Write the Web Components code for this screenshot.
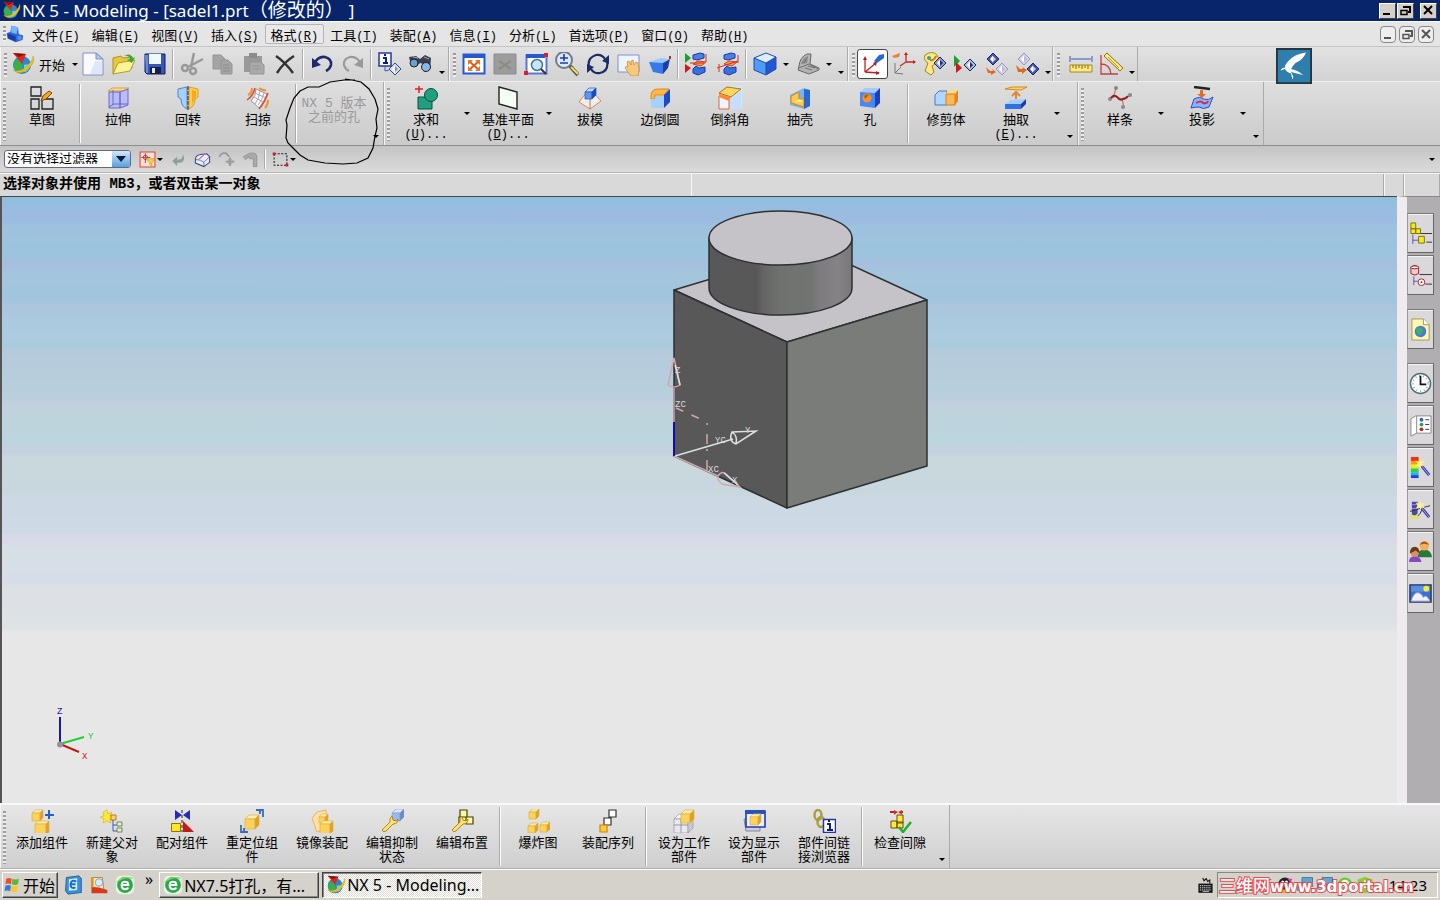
<!DOCTYPE html>
<html lang="zh-CN">
<head>
<meta charset="utf-8">
<title>NX 5 - Modeling</title>
<style>
html,body{margin:0;height:100%}
body{font-family:"Noto Sans CJK SC","Liberation Sans",sans-serif;font-size:13px;color:#000;background:#d4d0c8}
</style>
</head>
<body>
<nx-app></nx-app>
<script>
/* ---------- icon drawings, all on a 24 x 24 grid ---------- */
const cube=(x,y,w,d,t,f,s,k='none')=>`<g stroke="${k}" stroke-width=".7" stroke-linejoin="round"><path fill="${t}" d="M${x} ${y+d}l${d} ${-d}h${w}l${-d} ${d}z"/><path fill="${f}" d="M${x} ${y+d}h${w}v${w}h${-w}z"/><path fill="${s}" d="M${x+w} ${y+d}l${d} ${-d}v${w}l${-d} ${d}z"/></g>`;
const gold=(x,y,w,d)=>cube(x,y,w,d,'#ffeeb0','#fcd35a','#e0a020','#e0b048');
const blue=(x,y,w,d)=>cube(x,y,w,d,'#bcdcff','#5c98f4','#1c48c8','#2a50b0');
const dia=(x,y,a,b,k)=>`<path d="M${x} ${y-6}l6 6-6 6-6-6z" fill="${a}" stroke="${k}"/><path d="M${x-3} ${y}l3-3.500v7z" fill="#fff"/><path d="M${x} ${y-3}l3 3-3 3z" fill="${b}"/>`;
const globe=`<circle cx="11" cy="13" r="9" fill="#2a88d0"/><path d="M5 8q5 0 6 5t-3 8q-7-4-5-11z" fill="#38b048"/><path d="M13 13q5-2 6 1-2 6-6 6z" fill="#70d8f0"/><path d="M2 18q7 3 14-4t6-10q3 6-5 13T2 18z" fill="#e8c020" stroke="#c89818" stroke-width=".5"/><path d="M2 1l13 1-4 10z" fill="#e02818"/><path d="M2 1l13 1-7 3z" fill="#901008"/>`;
const e360=`<rect x="1" y="1" width="22" height="22" rx="6" fill="#e4f4e0"/><circle cx="12" cy="12" r="9.500" fill="#28a848"/><path d="M7 12h9q0-4-4-4t-4 4q0 5 4 5 3 0 4-2" fill="none" stroke="#fff" stroke-width="2.500"/><path d="M2 9q8-8 19-5" stroke="#8ad070" fill="none" stroke-width="1.500"/>`;
const wrench=`<path d="M2 21l8-8q-1-4 2-6l1 4 3 1 2-2q0 5-5 5l-7 7q-2 2-4-1z" fill="#ffe070" stroke="#b08818"/>`;
const wand=`<path d="M13 10l8 10" stroke="#3838a8" stroke-width="3"/><path d="M13 10l8 10" stroke="#a8a8ff" stroke-width="1"/><path d="M12 2l1 4 4-1-3 3 3 3-4-1-1 3-1-3-4 1 2-3-2-3 4 1z" fill="#fff08a"/>`;
const stack=`<path d="M8 3l7-2 4 1v4l-7 2-4-1z" fill="#4a80e8" stroke="#1838a0"/><path d="M8 12l5-3 8 1-5 4z" fill="#ff9840" stroke="#d04018"/><path d="M8 17l3-3 3 2 6-1v5l-7 3-5-2z" fill="#3870e0" stroke="#1838a0"/>`;
const I={
nx:globe,
part:`<path d="M7 1l9 2 1 9 6 2-1 6-9 3-11-5-1-7 5-2z" fill="#2e68d8"/><path d="M7 1l9 2-2 9-7-2z" fill="#78b4ff"/><path d="M2 11l11 4v7l-10-4z" fill="#1840a0"/><circle cx="18" cy="17" r="3" fill="#4890f0"/>`,
new:`<path d="M2 1h13l7 6v16H2z" fill="#f8faff" stroke="#7890c8"/><path d="M15 1v6h7z" fill="#b8c8e8" stroke="#7890c8"/><path d="M14 9h7v13H9z" fill="#dfe8f8"/>`,
open:`<path d="M1 6l8-2 2 2 9-1v11L1 22z" fill="#e8c840" stroke="#b09018"/><path d="M1 22l5-11 17-3-5 11z" fill="#fff298" stroke="#b89c28"/><path d="M12 4q6-4 9 2l2-1-3 6-5-3 3-1q-1-4-6-3z" fill="#38a838"/>`,
save:`<path d="M2 2h20v20H4l-2-2z" fill="#3858b8" stroke="#101c60"/><path d="M6 2h12v10H6z" fill="#f0f8ff"/><path d="M7 15h11v7H7z" fill="#182048"/><path d="M9 16h3v5H9z" fill="#e0e8f8"/><path d="M2 3h3v18H3z" fill="#6888e0"/>`,
cut:`<g fill="none" stroke="#999" stroke-width="2.500"><path d="M14 1l-3 14M23 7L8 15"/><circle cx="5" cy="16" r="3"/><circle cx="13" cy="19" r="3"/></g>`,
copy:`<g fill="#a4a4a4" stroke="#959595"><path d="M2 3h8l4 4v10H2z"/><path d="M10 8h7l4 4v10H10z"/></g><path d="M12 13h6m-6 3h7m-7 3h7" stroke="#8c8c8c"/>`,
paste:`<path d="M2 4h18v16H2z" fill="#999"/><path d="M7 1h8v5H7z" fill="#8c8c8c"/><path d="M8 10h11l3 3v9H8z" fill="#ababab" stroke="#949494"/><path d="M10 14h8m-8 3h9" stroke="#949494"/>`,
del:`<path d="M3 4q9 6 17 17M21 4Q11 10 4 21" stroke="#333" stroke-width="2.500" fill="none"/>`,
undo:`<path d="M4 12q4-8 11-7 7 2 6 8-1 4-5 6" fill="none" stroke="#202870" stroke-width="2.600"/><path d="M2 6v10l9-3z" fill="#202870"/>`,
redo:`<path d="M20 12Q16 4 9 5 2 7 3 13q1 4 5 6" fill="none" stroke="#999" stroke-width="2.200"/><path d="M22 6v10l-9-3z" fill="#999"/>`,
info:`<path d="M1 1h12v13H1z" fill="#fff" stroke="#2038a0" stroke-width="1.500"/><path d="M5 6h3v5m-3 0h5M6 3h2" stroke="#101c80" stroke-width="2" fill="none"/><path d="M7 14v5l4-1" fill="none" stroke="#4060b0"/>${dia(17,17,'#d8e0f0','#8090c0','#384878')}`,
find:`<path d="M0 5l7-1 4 3 5-4 6 3-1 12-6 2-1-8-3-1-4 4-5-2z" fill="#3a4050"/><circle cx="5" cy="11" r="4" fill="#68a0d8" stroke="#222"/><circle cx="17" cy="15" r="4.500" fill="#88b8f0" stroke="#222"/><path d="M4 5l5 1m6-1l5 2" stroke="#aaa"/>`,
fit:`<path d="M1.500 2.500h21v19h-21z" fill="#fff" stroke="#2858d0" stroke-width="2"/><path d="M1 2h22v4H1z" fill="#2858d0"/><path d="M7 9l10 9m0-9L7 18" stroke="#d86020" stroke-width="2"/><path d="M6 8h5l-5 5zm12 0v5l-5-5zM6 19v-5l5 5zm12 0h-5l5-5z" fill="#e07828"/>`,
fitoff:`<path d="M1 2h22v20H1z" fill="#9c9c9c" stroke="#8c8c8c"/><path d="M6 9l12 8m0-8L6 17" stroke="#8a8a80" stroke-width="2"/>`,
zoombox:`<path d="M2.500 3.500h20v18h-20z" fill="#fff" stroke="#5878d8" stroke-width="2"/><path d="M2 2h19v4H2z" fill="#2858d0"/><path d="M0 19h4v4H0zM20 1h4v4h-4z" fill="#e02020"/><circle cx="13" cy="13" r="5.500" fill="#c8e4fa" stroke="#507090" stroke-width="1.500"/><path d="M17 17l5 5" stroke="#333" stroke-width="2"/>`,
zoom:`<circle cx="9" cy="8" r="8" fill="#d8ecff" stroke="#787888" stroke-width="2"/><path d="M9 2v7M5 6h8m-8 5h8" stroke="#2038b0" stroke-width="1.600"/><path d="M15 14l8 9" stroke="#555" stroke-width="4"/><path d="M16 15l7 7" stroke="#f8d860" stroke-width="2"/>`,
rotate:`<g fill="none" stroke="#1c2c68" stroke-width="2.200"><path d="M3 15Q1 6 10 3q6-1 9 4M21 9q2 10-7 12-6 1-9-4"/></g><path d="M23 3v9l-7-3zM1 21v-9l7 3z" fill="#1c2c68"/>`,
pan:`<path d="M1 3h21v17H1z" fill="#eef4ff" stroke="#8090d0"/><path d="M8 16q1-3 3-1l-1-5 2-1 2 4V9l2-1 1 5 2-3 2 1 1 7-1 6h-7z" fill="#f8c878" stroke="#c08838" stroke-width=".7"/>`,
persp:`<path d="M1 10l12-4 9 1-7 4z" fill="#98c8ff"/><path d="M1 10l14 1v11L5 20z" fill="#3878e8"/><path d="M15 11l7-4-2 9-5 6z" fill="#1840a8"/><path d="M21 4h2v3h-2z" fill="#d02020"/>`,
sh1:`${stack}<path d="M0 1l6 5-6 5z" fill="#18a030"/><path d="M0 12l6 4-6 5z" fill="#d01818"/><path d="M5 11h14M21 2v8" stroke="#d83020"/>`,
sh2:`${stack}<path d="M1 16l21-7M3 12v8m19-17v8" stroke="#d83020"/>`,
shade:`<path d="M1 6l12-5 10 4-10 6z" fill="#d8f0ff"/><path d="M1 6l12 5v12L1 18z" fill="#4c9cf8"/><path d="M13 11l10-6v12l-10 6z" fill="#2058d8"/><path d="M1 6l12-5 10 4v12l-10 6L1 18zM1 6l12 5 10-6M13 11v12" fill="none" stroke="#2848a8"/>`,
orient:`<path d="M3 14q1-9 8-12h4l-1 10 9 4v2l-10 4-11-4z" fill="#b4b4b4" stroke="#666"/><path d="M5 12q2-6 7-8l-1 7z" fill="#858585"/><path d="M3 16l10-4 9 5m-13-1l7 2m-4-4l7 2" fill="none" stroke="#707070"/>`,
wcs:`<g stroke="#c82020" fill="none" stroke-width="1.300"><path d="M4 20V6M4 20l14 1M4 20l11-9"/></g><path d="M4 4l2 4H2zM16 9l-1 5-3-3zM19 21l-4 2v-4z" fill="#b02020"/><path d="M13 9l5-6 5-1v4l-7 5z" fill="#2868d0"/>`,
wcs2:`<g fill="none" stroke="#c82828" stroke-width="1.300"><path d="M14 10V2M14 10h9M14 10l-6 4"/></g><g fill="none" stroke="#777"><path d="M3 21V11m0 10l8 1m-8-1l6-6"/></g><path d="M0 4l8-3-1 4-5 1z" fill="#f08030"/><path d="M14 0l2 3h-4zM24 10l-3 2V8z" fill="#c02020"/>`,
show:`<path d="M2 3q7-5 12 0 3 4-1 8l-4 3 2 6-3 3-6-4 3-8Q0 8 2 3z" fill="#ffe880" stroke="#a08818"/><circle cx="6" cy="6" r="2" fill="#30a0a0"/><path d="M7 8q4 1 6-4" fill="none" stroke="#c87820" stroke-width="2"/>${dia(17,11,'#9098d0','#1c2c78','#182868')}`,
show2:`<path d="M0 3l6 6-6 6z" fill="#18a030"/><path d="M2 10l6 6-6 5z" fill="#d01818"/>${dia(16,13,'#b0b8d8','#1c2c78','#182868')}`,
lay1:`${dia(8,7,'#4858a0','#c8d0e8','#182868')}${dia(17,17,'#d0d0e8','#b8b8d8','#9898c0')}<path d="M1 15l4 4h3l-1-2 4 3-5 3v-2H3z" fill="#e06820"/>`,
lay2:`${dia(8,7,'#d0d0e8','#b8b8d8','#9898c0')}${dia(17,17,'#4858a0','#c8d0e8','#182868')}<path d="M0 13l4 4h3l-1-2 5 3-5 4v-2H2z" fill="#e06820"/>`,
ruler:`<path d="M1 13h22v7H1z" fill="#ffe88a" stroke="#a88818"/><path d="M4 13v3m3-3v4m3-4v3m3-3v4m3-4v3m3-3v4" stroke="#806808"/><path d="M2 7h20M1 4v6M23 4v6" stroke="#3858b8"/>`,
angle:`<path d="M1 3v19h17M1 12q9 0 10 10" fill="none" stroke="#c04040" stroke-width="1.300"/><path d="M4 4l3-3 16 15-3 3z" fill="#ffe88a" stroke="#907010"/><path d="M8 5l3 3 2 2 3 3 3 3" stroke="#c09820"/>`,
/* modelling commands */
sketch:`<g fill="none" stroke="#222" stroke-width="1.300"><path d="M1 1h10v9H1zM1 13h8v10H1zM12 13h11v10H12z"/></g><path d="M11 15l2-5 6-5 3 2-6 6z" fill="#f0a820" stroke="#884008"/>`,
extrude:`<path d="M2 5l4-3h17l-4 3z" fill="#ffd890" stroke="#e0a030"/><path d="M3 6h11v16H3zM14 6l8-3v16l-8 3z" fill="#bcbcf4" stroke="#6868d0"/><path d="M7 4v15M3 21l5-3h14" fill="none" stroke="#6868d0"/>`,
revolve:`<path d="M2 3l9-2v22q-6-3-6-10l-3-2z" fill="#a8d0fc" stroke="#4888d8"/><path d="M13 1l9 2v8l-3 2q0 7-6 10z" fill="#ffd040" stroke="#e09830"/><path d="M16 4l4 1v5l-4 8z" fill="#f8a820"/><path d="M12 0v24" stroke="#222" stroke-dasharray="4 1"/>`,
sweep:`<path d="M5 15q5-5 5-12l11 5q-3 8-8 14-4-4-8-7z" fill="#f8f8ff" stroke="#999"/><path d="M8 11l9 5M9 7l11 5M14 5q-1 8-5 13m9-11q-2 8-6 12" stroke="#aaa" fill="none"/><path d="M1 14q6-4 8-12m13 5q-3 9-9 16" fill="none" stroke="#e04838" stroke-width="1.500"/><path d="M2 9q4-2 4-7m13 20q3-3 3-8M13 2q4 3 7 2" fill="none" stroke="#f09030" stroke-width="2"/>`,
unite:`<path d="M4 11h14v12H4z" fill="#20a080" stroke="#0a5038"/><circle cx="17" cy="9" r="6.500" fill="#20a080" stroke="#0a5038"/><path d="M5 0v7M1 3h8" stroke="#e02020" stroke-width="1.500"/>`,
plane:`<path d="M3 1l18 5v17L3 18z" fill="#f4fff4" stroke="#222" stroke-width="1.400"/>`,
draft:`<path d="M1 16L9 6h6l8 9-11 8z" fill="#eee" stroke="#d88868"/><path d="M12 13v10" stroke="#d86848"/>${blue(7,2,7,4)}`,
blend:`<path d="M3 10q0-7 7-7h11l-5 6H7v4H3z" fill="#ffb840" stroke="#e08818"/><path d="M3 13h4l1-3h8v12H3z" fill="#a8d0ff"/><path d="M16 9l6-6v13l-6 6z" fill="#1c48d0"/>`,
chamfer:`<path d="M12 0h12v23H12z" fill="#bff0f4"/><path d="M1 10l10 4v9H1z" fill="#f0f4ff" stroke="#e06838"/><path d="M12 14l11-9v18H12z" fill="#c8dcff"/><path d="M1 7l8-6 14 2-10 8z" fill="#ffd860" stroke="#c06820"/><path d="M1 8l12 3-2 4L1 11z" fill="#ff8838"/>`,
shell:`<path d="M2 9l14-7 6 2v15l-6 4-14-4z" fill="#78b4f4"/><path d="M3 10l8-4v8l5-2v9L3 17z" fill="#ffc848" stroke="#c88818"/><path d="M6 16l6-3 3 3" fill="#fff098"/><path d="M16 3v20l6-3V4z" fill="#2868c8"/>`,
hole:`<path d="M2 6l5-4h15l-5 5z" fill="#a8c8ff"/><path d="M2 6l15 1v15L2 20z" fill="#4488f0"/><path d="M17 7l5-5v15l-5 5z" fill="#1840c0"/><circle cx="9" cy="12" r="4.500" fill="#f89028"/><path d="M6 10q2-3 5-1l-4 4z" fill="#b06018"/>`,
trim:`<path d="M1 9l4-4h8v14H1z" fill="#b0d8ff" stroke="#4878c0"/><path d="M12 8l2-4h10l-3 5z" fill="#ffd890"/><path d="M12 8h9v11h-9z" fill="#ffb850" stroke="#d08020"/><path d="M21 8l3-4v11l-3 4z" fill="#d88828"/>`,
extract:`<path d="M1 3l7-2h15l-6 3z" fill="#ffd870" stroke="#d88818"/><path d="M12 5v8m-4-3l4-4 4 4" stroke="#e08838" stroke-width="2" fill="none"/><path d="M1 18l6-4 15-1-5 5z" fill="#a0ccff"/><path d="M1 18h16v5H1z" fill="#3070e0"/><path d="M17 18l5-5v5l-5 5z" fill="#1840a0"/>`,
spline:`<path d="M2 13l6 -3 5 3 8-3M6 9l2-7m6 11l2 8" fill="none" stroke="#c87878" stroke-width="1.200"/><g fill="#888"><circle cx="8" cy="2" r="2"/><circle cx="2" cy="13" r="2"/><circle cx="15" cy="21" r="2"/><circle cx="22" cy="9" r="2"/></g><path d="M3 12q3-4 6-1 3 4 6 2 3 0 5-3" fill="none" stroke="#902020" stroke-width="2"/>`,
project:`<path d="M4 1l16 2" stroke="#222" stroke-width="2.500"/><path d="M10 4h3v4h3l-4 4-5-4h3z" fill="#e86828"/><path d="M4 13q6-3 9 0 6 2 10-2l-4 10q-6 3-10 0-4 0-8 1z" fill="#80b8ff" stroke="#3848c0"/><path d="M6 17q5-3 7 0 4 1 5-2" fill="none" stroke="#e02840" stroke-width="2"/>`,
/* selection bar */
selpt:`<path d="M1.500 1.500h21v21h-21z" fill="#f6e0d8" stroke="#e04830" stroke-width="1.500"/><path d="M3 9h13M9 3v14" stroke="#a04040" stroke-width="1.300"/><circle cx="9" cy="9" r="3" fill="none" stroke="#a02020"/><path d="M10 11h12l-4 6v5l-3-3v-3z" fill="#f8d040" stroke="#c89820"/>`,
back:`<path d="M3 14l7-6v4q9 1 8-8 6 13-8 13v4z" fill="#8ca09a"/>`,
box:`<path d="M2 12q0-6 7-7l9-1 4 4v8l-8 6-12-5z" fill="#e8ecff" stroke="#404890" stroke-width="1.500"/><path d="M2 12q8 0 12 4l8-8M14 16v6" fill="none" stroke="#404890"/><path d="M8 11l7-6M6 12l7-6" stroke="#e04040"/>`,
ghost1:`<path d="M2 8q2-6 9-5l5 5M17 9v12m-6-6h12" fill="none" stroke="#999" stroke-width="2.500"/><circle cx="17" cy="15" r="3.500" fill="none" stroke="#999"/>`,
ghost2:`<path d="M2 8l9-5h7l3 4v15h-5V11h-5l-1-3-5 4z" fill="#aaa" stroke="#888"/>`,
rect:`<path d="M3 4h18v16H3z" fill="none" stroke="#222" stroke-width="1.500" stroke-dasharray="3 2"/><path d="M1 2h4v4H1zM19 18h4v4h-4z" fill="#d02020"/>`,
/* assemblies */
add:`${gold(2,1,8,3)}${gold(5,12,11,3)}<path d="M19 1v9m-4-4h9" stroke="#2060d0" stroke-width="2"/>`,
parent:`<path d="M7 1l1 4 4-2-2 4 4 2-4 1 1 4-4-2-4 2 1-4-4-2 4-1-1-4z" fill="#ffe830" stroke="#c8b038" stroke-width=".6"/><path d="M11 6h5v5h-5z" fill="#ffd070" stroke="#c07820"/><path d="M13 11v11h4m-4-6h4" fill="none" stroke="#3858c0"/><path d="M17 13h5v4h-5zM17 19h5v4h-5z" fill="#e8f0c0" stroke="#688868"/>`,
mate:`<path d="M5 1l7 5-7 5zM20 1l-7 5 7 5z" fill="#2828b8"/><path d="M12 1v22" stroke="#222" stroke-dasharray="3 2"/><path d="M1.500 14.500h9v8h-9z" fill="#ffe820" stroke="#907010"/><path d="M13 12l11 11H13z" fill="#c81818"/>`,
move:`${gold(5,6,10,4)}<path d="M16 1h7v7m-4-5h1v2M8 23H1v-7m4 5H4v-2" fill="none" stroke="#4068b8" stroke-width="1.800"/>`,
mirror:`<path d="M2 9l5-6 9-2v19l-9 3z" fill="#ffe0a8" stroke="#f0b060"/>${gold(9,5,6,3)}${gold(10,12,10,3)}`,
suppress:`${cube(12,0,8,4,'#d8e8ff','#98b8f0','#6888c8','#88a0d0')}${wrench}`,
arrange:`<path d="M10 1h7v7h-7zM16 8h7v7h-7zM9 8h7v6H9z" fill="#fff8a0" stroke="#404010" stroke-width="1.200"/>${wrench}`,
explode:`${gold(3,0,7,3)}${gold(2,14,7,3)}${gold(14,13,7,3)}`,
sequence:`<g stroke="#333" stroke-width="1.200" fill="#fff"><path d="M13 1h7v7h-7zM8 9h7v7H8z"/><path d="M4 16h7v7H4z" fill="#ffcc30" stroke="#d08010"/></g>`,
work:`${cube(2,5,14,5,'#f4f4fa','#e8e8f4','#c8c8d8','#999')}<path d="M9 10v14M2 16h14" stroke="#999"/>${gold(9,1,9,4)}`,
display:`<path d="M2 10h16v12H4z" fill="#c8d0e0" stroke="#888"/><path d="M4 2h19v16H4z" fill="#e8f0ff" stroke="#2038b8" stroke-width="1.600"/><path d="M3 1h20v4H3z" fill="#2850c0"/>${gold(8,5,8,3)}`,
link:`<g fill="none" stroke="#a8a040" stroke-width="2.500"><ellipse cx="6" cy="6" rx="3.500" ry="5"/><ellipse cx="9" cy="13" rx="3.500" ry="5"/></g><path d="M11.500 10.500h12v13h-12z" fill="#fff" stroke="#2038a0" stroke-width="1.500"/><path d="M15 15h3v6m-3 0h6M16 12h2" stroke="#101c80" stroke-width="2" fill="none"/>`,
check:`<path d="M2 3h5m5 0h3" stroke="#c02020" stroke-width="2"/><path d="M6 1l4 2-4 3zM14 1l-4 2 4 3z" fill="#c83820"/><path d="M9 6h6v8H9zM3 12h6v7H3zM9 13h6v6H9z" fill="#ffe840" stroke="#605010"/><path d="M11 18l4 5 8-10" fill="none" stroke="#20b030" stroke-width="2.500"/>`,
/* resource bar */
r1:`<g fill="#f4ec18" stroke="#807010"><path d="M2 1h5v6H2zM7 7h5v5H7zM2 7h5v5H2zM10 15h6v7h-6z"/></g><path d="M12 12h12M18 21h6" stroke="#333"/><path d="M4 13v10m0-4h6" stroke="#5858b0"/>`,
r2:`<path d="M2 3q4-3 8 0v7q-4 3-8 0z" fill="#f8c8c8" stroke="#982020"/><ellipse cx="6" cy="3.500" rx="4" ry="1.500" fill="#fff" stroke="#982020"/><path d="M11 11h13M17 21h7" stroke="#333"/><path d="M5 13v9m0-4h4" stroke="#5858b0"/><circle cx="13" cy="19" r="3.500" fill="#fff" stroke="#b02020"/><circle cx="13" cy="19" r="1" fill="#b02020"/>`,
r3:`<path d="M3 1h12l6 6v16H3z" fill="#fff6b0" stroke="#a09858"/><path d="M15 1v6h6" fill="#fff" stroke="#a09858"/><circle cx="12" cy="14" r="6" fill="#4878d8"/><path d="M8 11q5-3 6 1t-3 6q-5-3-3-7z" fill="#40b060"/>`,
r4:`<circle cx="12" cy="12" r="10.500" fill="#fff" stroke="#507078" stroke-width="1.500"/><circle cx="12" cy="12" r="8" fill="none" stroke="#88a8b0" stroke-dasharray="1 3" stroke-width="2"/><path d="M12 4v9h6" fill="none" stroke="#111" stroke-width="1.800"/>`,
r5:`<path d="M2 5l5-3h16v18H8l-6 3z" fill="#fff" stroke="#888"/><path d="M8 2v18" stroke="#888"/><circle cx="13" cy="6" r="2" fill="#4060c0"/><circle cx="13" cy="11" r="2" fill="#30a050"/><circle cx="13" cy="16" r="2" fill="#d02020"/><path d="M17 6h4m-4 5h4m-4 5h4" stroke="#333"/>`,
r6:`<path d="M2 1h8v5H2z" fill="#f03010"/><path d="M2 5h8v4H2z" fill="#ff9a10"/><path d="M2 9h8v4H2z" fill="#f0f010"/><path d="M2 13h8v4H2z" fill="#30d050"/><path d="M2 17h8v3H2z" fill="#18b8e8"/><path d="M2 20h8v3H2z" fill="#2040d0"/>${wand}`,
r7:`<path d="M3 4h6v12l-3 3-3-2z" fill="#4848a8"/><path d="M1 14l21-6M2 19q8 4 12-8" fill="none" stroke="#333"/><ellipse cx="6" cy="20" rx="5" ry="2" fill="#e8e060"/><path d="M3 7h6M3 11h6" stroke="#9898e0"/>${wand}`,
r8:`<path d="M9 18q0-8 7-8t8 8z" fill="#287838"/><circle cx="16" cy="6" r="5" fill="#f0b060"/><path d="M11 5q5-7 10 0l-5-1z" fill="#a85810"/><path d="M0 23q0-6 6-6t7 6z" fill="#8848c0"/><circle cx="6" cy="13" r="4.500" fill="#d89060"/><path d="M1 14q0-7 5-7t5 7l-4-3z" fill="#703818"/>`,
r9:`<path d="M1 3h22v18H1z" fill="#3870d8" stroke="#283858" stroke-width="1.500"/><path d="M2 4h20v6H2z" fill="#5890e0"/><circle cx="18" cy="7" r="3" fill="#ffe830"/><path d="M2 20q3-9 7-9t6 5q3-4 7 4z" fill="#f0f0ff" stroke="#9090c0"/>`,
/* desktop */
win:`<path d="M4 4q4-2 7 0l-1 7q-4-2-7 0z" fill="#e85028"/><path d="M12 4q4 2 8 0l-1 7q-4 2-8 0z" fill="#60b838"/><path d="M3 13q4-2 7 0l-1 7q-4-2-7 0z" fill="#3878d8"/><path d="M11 13q4 2 8 0l-1 7q-4 2-8 0z" fill="#f8c828"/>`,
ql1:`<path d="M4 3l15-2 3 3v17l-16 2-3-4z" fill="#3890d8" stroke="#205898"/><path d="M7 5l10-1v14l-10 1z" fill="#d8f0ff"/><path d="M16 8q-6-3-7 3 0 6 6 4m-5-4h5" stroke="#1870c0" fill="none" stroke-width="2.500"/>`,
ql2:`<path d="M4 3h12l2 16H4z" fill="#f8e8b0" stroke="#b07830"/><circle cx="12" cy="9" r="4.500" fill="#d0ecff" stroke="#8098b0"/><path d="M3 14l9 1 10 3v4H3z" fill="#d83820"/><path d="M4 3v12" stroke="#e09020" stroke-width="3"/>`,
e360,
kbd:`<path d="M2 10h20v13H2z" fill="#111"/><path d="M4 13h16M4 16h16M4 19h16" stroke="#fff" stroke-width="1.300" stroke-dasharray="2 1"/><path d="M8 21h9" stroke="#fff"/><path d="M8 2l2 4 3-3 2 4 3-2v5" stroke="#111" fill="none" stroke-width="1.500"/>`,
t1:`<path d="M1 10l6-5 5 3 6-2 4 8-8 6-10-2z" fill="#f07860"/>`,
t2:`<path d="M4 14q8-13 17-9l-7 2-3 9z" fill="#203890"/>`,
t3:`<circle cx="12" cy="11" r="9" fill="#222"/><circle cx="9" cy="8" r="2" fill="#fff"/><circle cx="14" cy="8" r="2" fill="#fff"/><path d="M4 18h16l-3 5H7z" fill="#f8a828"/><path d="M15 3l7 1-3 5z" fill="#e838b8"/>`,
t4:`<path d="M8 2h14v12H8z" fill="#58a8d8" stroke="#386888"/><path d="M2 9h12v10H2z" fill="#88c8f0" stroke="#386888"/>`,
t5:`<circle cx="12" cy="12" r="10" fill="#70c838"/><circle cx="12" cy="10" r="5" fill="#f0ffe0"/><circle cx="12" cy="10" r="2" fill="#285818"/>`,
t6:`<path d="M12 1l10 4v8q-3 8-10 10Q4 21 2 13V5z" fill="#88d030"/><path d="M7 11h10m-5-5v10" stroke="#fff" stroke-width="3"/>`,
swallow:`<path d="M0 0h24v24H0z" fill="#2f7fae" stroke="#26363e" stroke-width="2.500"/><path d="M20 3Q12 4 8 9q-2 2-2 4-2 0-3 2l3-1q1 2 4 3l1 4q1-2 0-3l-1-2 8 2q-3-3-8-4 1-2 3-4 5-2 7-7z" fill="#fff"/>`
};

const R=':host([hidden]){display:none}*{box-sizing:border-box}button{font:inherit;color:inherit;background:none;border:0;padding:0;margin:0}';
const define=(name,css,html)=>customElements.define(name,class extends HTMLElement{
  connectedCallback(){
    if(this.shadowRoot)return;
    this.attachShadow({mode:'open'}).innerHTML=`<style>${R}${css}</style>${typeof html==='function'?html(this):html}`;
  }
});
const at=(e,n,d='')=>e.getAttribute(n)??d;

define('nx-icon',':host{display:block;flex:none;width:24px;height:24px}svg{display:block;width:100%;height:100%}',
  e=>`<svg viewBox="0 0 24 24" aria-hidden="true">${I[at(e,'name')]||''}</svg>`);

define('nx-tool',`:host{display:flex;flex:none;width:31px;align-items:center}
  button{width:31px;height:30px;display:flex;align-items:center;justify-content:center;border:1px solid transparent;border-radius:3px}
  :host([on]) button{background:#fff;border-color:#444}
  :host([small]){width:24px}:host([small]) button{width:24px;height:24px}
  nx-icon{width:24px;height:24px}:host([small]) nx-icon{width:17px;height:17px}`,
  e=>`<button aria-label="${at(e,'label')}"><nx-icon name="${at(e,'icon')}"></nx-icon></button>`);

define('nx-command',`:host{display:block;flex:none;width:70px}
  button{width:100%;display:flex;flex-direction:column;align-items:center;gap:2px;padding-top:4px}
  nx-icon{width:24px;height:24px}
  .label{width:56px;line-height:14px;text-align:center}
  :host([disabled]) button{color:#9a9a9a;padding-top:15px;font-family:"Liberation Mono","Noto Sans CJK SC",monospace}
  :host([disabled]) .label{width:68px}
  :host([disabled]) nx-icon{display:none}`,
  e=>`<button ${e.hasAttribute('disabled')?'disabled':''}><nx-icon name="${at(e,'icon')}"></nx-icon><span class="label"><slot></slot></span></button>`);

define('nx-key',`:host{display:inline;font:12px/12px "Liberation Mono",monospace}`,
  `(<u><slot></slot></u>)<slot name="tail"></slot>`);

define('nx-arrow',`:host{display:flex;flex:none;width:12px;align-items:center;justify-content:center}
  button{display:block;width:12px;height:12px}
  i{display:block;margin:auto;border:3px solid transparent;border-width:3px 3px 0;border-top-color:#000;width:0}
  :host([more]){align-items:flex-end;padding-bottom:3px}`,
  `<button aria-label="更多"><i></i></button>`);

define('nx-sep',`:host{display:block;flex:none;width:6px;padding:2px 2px}i{display:block;height:100%;border-left:1px solid #aaa;border-right:1px solid #fff}`,'<i></i>');

define('nx-band',`:host{display:flex;flex:none;align-items:stretch;border-right:1px solid #aaa;border-left:1px solid #f4f4f4}
  .grip{flex:none;width:3px;margin:6px 2px 4px 3px;background:repeating-linear-gradient(#9c9c9c 0 2px,#eee 2px 4px)}
  :host([wide]) .grip{margin-right:1px;margin-left:2px}`,
  `<span class="grip"></span><slot></slot>`);

define('nx-window-buttons',`:host{display:flex;gap:1px}
  button{width:17px;height:16px;background:#d4d0c8;border:1px solid;border-color:#fff #404040 #404040 #fff;display:flex}
  button:last-child{margin-left:5px}
  svg{width:13px;height:13px;margin:auto;fill:none;stroke:#000;stroke-width:2}
  :host([soft]){gap:3px}:host([soft]) button{width:16px;height:17px;border-color:#888;border-radius:4px;background:#eee}
  :host([soft]) button:last-child{margin-left:0}:host([soft]) svg{stroke:#555}`,
  `<button aria-label="最小化"><svg viewBox="0 0 13 13"><path d="M2 10h7"/></svg></button>
   <button aria-label="还原"><svg viewBox="0 0 13 13"><path d="M4 3h7v5H9" /><path stroke-width="1.500" d="M2 6.500h6v4H2z"/></svg></button>
   <button aria-label="关闭"><svg viewBox="0 0 13 13"><path d="M2 2l8 8m0-8l-8 8"/></svg></button>`);

define('nx-titlebar',`:host{display:flex;align-items:center;height:21px;background:#08246b;color:#fff;padding:0 3px 0 2px;font:17px "Noto Sans","Noto Sans CJK SC",sans-serif}
  nx-icon{width:19px;height:19px;margin-right:1px}
  h1{font:inherit;margin:0;flex:1;line-height:20px;white-space:pre}
  span{font-size:19px;line-height:20px}`,
  `<nx-icon name="nx"></nx-icon><h1>NX 5 - Modeling - [sadel1.prt<span>（修改的） </span>]</h1><nx-window-buttons></nx-window-buttons>`);

define('nx-menubar',`:host{display:flex;align-items:center;height:26px;background:#e5e5e5;border-top:1px solid #fff;border-bottom:1px solid #c4c4c4;padding:0 6px 0 3px}
  .grip{width:3px;height:16px;background:repeating-linear-gradient(#9c9c9c 0 2px,#eee 2px 4px)}
  nx-icon{width:18px;height:18px;margin-right:2px}
  nav{display:flex;flex:1}
  button{height:20px;padding:0 5px;border:1px solid transparent;line-height:17px;white-space:nowrap}
  .on{border-color:#b4b4bc;border-radius:2px;background:#e9e9e9}`,
  `<span class="grip"></span><nx-icon name="part"></nx-icon><nav>${['文件F','编辑E','视图V','插入S','格式R','工具T','装配A','信息I','分析L','首选项P','窗口O','帮助H'].map(t=>`<button class="${t[2]==='R'?'on':''}">${t.slice(0,-1)}<nx-key>${t.slice(-1)}</nx-key></button>`).join('')}</nav><nx-window-buttons soft></nx-window-buttons>`);

const tools=s=>s.split(' ').map(n=>n==='|'?'<nx-sep></nx-sep>':n==='v'?'<nx-arrow></nx-arrow>':n==='V'?'<nx-arrow more></nx-arrow>':`<nx-tool icon="${n}" label="${n}"${n==='wcs'?' on':''}></nx-tool>`).join('');

define('nx-standard-bar',`:host{display:flex;height:34px;background:linear-gradient(#e2e2e2,#d2d2d2)}
  .start{display:flex;align-items:center;gap:4px;width:68px;white-space:nowrap}
  .start nx-icon{margin-left:2px}
  .layers nx-arrow{width:9px}
  .measure nx-arrow{width:10px}
  .measure nx-tool:first-of-type{margin-left:3px}`,
  `<nx-band><button class="start"><nx-icon name="nx"></nx-icon>开始<nx-arrow></nx-arrow></button>${tools('new open save | cut copy paste del | undo redo | info find V')}</nx-band>
   <nx-band>${tools('fit fitoff zoombox zoom rotate pan persp | sh1 sh2 | shade v orient v V')}</nx-band>
   <nx-band class="layers">${tools('wcs wcs2 show show2 lay1 lay2 V')}</nx-band>
   <nx-band class="measure">${tools('ruler angle V')}</nx-band>`);

const cmd=(i,l)=>`<nx-command icon="${i}">${l}</nx-command>`;
const key=k=>`<br><nx-key>${k}<span slot="tail">...</span></nx-key>`;
define('nx-feature-bar',`:host{display:flex;height:65px;background:linear-gradient(#dedede,#cbcbcb);border-top:1px solid #f0f0f0;border-bottom:1px solid #8e8e8e}
  nx-arrow[more]{width:14px}`,
  `<nx-band wide>${cmd('sketch','草图')}<nx-sep></nx-sep>${cmd('extrude','拉伸')}${cmd('revolve','回转')}${cmd('sweep','扫掠')}<nx-sep></nx-sep><nx-command disabled>NX 5 版本 之前的孔</nx-command><nx-arrow more></nx-arrow></nx-band>
   <nx-band wide>${cmd('unite','求和'+key('U'))}<nx-arrow></nx-arrow>${cmd('plane','基准平面'+key('D'))}<nx-arrow></nx-arrow>${cmd('draft','拔模')}${cmd('blend','边倒圆')}${cmd('chamfer','倒斜角')}${cmd('shell','抽壳')}${cmd('hole','孔')}<nx-sep></nx-sep>${cmd('trim','修剪体')}${cmd('extract','抽取'+key('E'))}<nx-arrow></nx-arrow><nx-arrow more></nx-arrow></nx-band>
   <nx-band wide>${cmd('spline','样条')}<nx-arrow></nx-arrow>${cmd('project','投影')}<nx-arrow></nx-arrow><nx-arrow more></nx-arrow></nx-band>`);

define('nx-selection-bar',`:host{display:flex;align-items:center;height:27px;background:linear-gradient(#c4c4c4,#dadada);border-bottom:1px solid #b4b4b4;padding:0 2px 0 4px}
  .filter{position:relative;width:127px;height:18px;margin-right:4px}
  select{display:block;width:100%;height:18px;appearance:none;border:1px solid #668;border-radius:3px;background:#fff;padding:0 2px 3px;font:13px/13px "Noto Sans CJK SC",sans-serif;color:#000}
  .drop{position:absolute;right:1px;top:1px;width:18px;height:16px;background:linear-gradient(#d0e8fa,#58a0dc);border-radius:0 2px 2px 0;display:flex;pointer-events:none}
  .drop i{margin:auto;border:5px solid transparent;border-width:6px 5px 0;border-top-color:#0c1c40}
  nx-arrow{margin-left:-5px}nx-sep{height:24px}
  .end{margin-left:auto;height:20px}`,
  `<span class="filter"><select aria-label="选择过滤器"><option>没有选择过滤器</option><option>边</option></select><span class="drop"><i></i></span></span>
   ${['selpt','v','back','box','ghost1','ghost2','|','rect','v'].map(n=>n==='v'?'<nx-arrow></nx-arrow>':n==='|'?'<nx-sep></nx-sep>':`<nx-tool small icon="${n}" label="${n}"></nx-tool>`).join('')}<nx-arrow class="end"></nx-arrow>`);

define('nx-status',`:host{display:flex;height:23px;background:#d9d9d9;border-top:1px solid #f6f6f6;font-weight:bold}
  p{margin:0;flex:none;width:48%;padding-left:3px;line-height:20px;white-space:pre;font-family:"Liberation Mono","Noto Sans CJK SC",monospace;font-size:14px}
  span{border-left:1px solid #f8f8f8;border-right:1px solid #aaa;flex:1}
  .a{flex:none;width:20px}.b{flex:none;width:36px}`,
  `<p>选择对象并使用 MB3，或者双击某一对象</p><span></span><span class="a"></span><span class="b"></span>`);

define('nx-markup',`:host{position:absolute;left:280px;top:74px;width:104px;height:96px;pointer-events:none}svg{display:block}`,
  `<svg width="104" height="96" viewBox="280 74 104 96"><path d="M345 79l7 1 9 2 8 7 6 10 3 10-2 10 1 9-2 8-2 12-5 10-11 5-14 1-18-1-17-3-8-5-5-5-7-7-2-5 1-13-1-5 4-12 4-10 6-7 8-4 11 0 11-5 14-2 11 0" fill="none" stroke="#000" stroke-width="1.200"/></svg>`);

define('nx-badge',`:host{position:absolute;left:1276px;top:48px;width:36px;height:36px}nx-icon{width:36px;height:36px}`,`<nx-icon name="swallow"></nx-icon>`);

/* graphics window: banded backdrop, solid body, coordinate systems */
define('nx-viewport',`:host{position:relative;display:block;flex:1;min-width:0;overflow:hidden;border-left:2px solid #555;border-top:1px solid #3c4458;
  background:linear-gradient(#8fc0d4 0,#93bddf 6px,#9bbce0 16px,#9bbce0 24px,#9ec2dd 30px,#9bc4de 60px,#a4c0de 63px,#a5c0de 72px,#a3c6dd 76px,#a1c5dd 104px,#abc6dd 108px,#abc6dd 118px,#abcadf 122px,#abcbdd 150px,#b5cbdb 154px,#b8cfde 200px,#c1cfdd 205px,#bfd3dd 212px,#bcd5dd 246px,#c4d2df 250px,#c4d2df 256px,#c8d8dd 260px,#c8d7dd 295px,#ccd9e3 301px,#cdd9e5 335px,#d7d9e7 339px,#d9d9e8 345px,#d6dfe5 350px,#d7dde8 385px,#dde0e5 392px,#dde2e5 430px,#e7e7e7 436px)}
  .body{position:absolute;top:3px;left:calc(50% - 40px)}
  .triad{position:absolute;left:48px;bottom:40px}
  text{font:9px "Liberation Mono",monospace}`,
  `<svg class="body" width="280" height="320" viewBox="660 200 280 320" role="img" aria-label="实体模型">
    <defs><linearGradient id="cyl"><stop offset="0" stop-color="#585858"/><stop offset=".33" stop-color="#585858"/><stop offset=".38" stop-color="#646464"/><stop offset=".5" stop-color="#707270"/><stop offset=".72" stop-color="#727472"/><stop offset=".76" stop-color="#7c7a7c"/><stop offset=".9" stop-color="#868286"/><stop offset="1" stop-color="#787878"/></linearGradient></defs>
    <g stroke="#2c3032" stroke-width="1.500" stroke-linejoin="round">
    <path d="M674 290l140-42 113 52-140 42z" fill="#c5c3c7"/>
    <path d="M674 290l113 52v166l-113-52z" fill="#585858"/>
    <path d="M787 342l140-42v166l-140 42z" fill="#7a7c79"/>
    <path d="M709 238v50a71.500 27 0 0 0 143 0v-50z" fill="url(#cyl)"/>
    <ellipse cx="780.500" cy="238" rx="71.500" ry="27" fill="#c5c3c7"/></g>
    <g fill="none" stroke="#d0a8ac" stroke-width="1.500">
    <path d="M674 422v-34"/><path d="M668 385q6 4 12 0l-6-27z"/><path d="M676 408l31 14" stroke-dasharray="8 9"/><path d="M707 423v48" stroke-dasharray="2 9 10 5"/><path d="M674 456l44 20M718 476q4-6 8-2l14 13-18-3q-5-4-4-8z"/></g>
    <path d="M674 422v34" stroke="#1010b0" stroke-width="2"/>
    <g fill="none" stroke="#e0e0e0" stroke-width="1.500"><path d="M675 456l58-17M732 432l24-1-20 13q-8-3-4-12zM732 432q6 4 4 12M680 385l-5-20M724 473l14 12"/></g>
    <g fill="#d8d8dc"><text x="675" y="373">Z</text><text x="675" y="407">ZC</text><text x="715" y="443">YC</text><text x="745" y="433">Y</text><text x="708" y="472">XC</text><text x="732" y="483">X</text></g></svg>
  <svg class="triad" width="54" height="60" viewBox="50 702 54 60" role="img" aria-label="视图三重轴"><path d="M60 742v-26" stroke="#1818a0" stroke-width="2"/><path d="M60 743l24-7" stroke="#20d030" stroke-width="2"/><path d="M60 743l19 8" stroke="#c01818" stroke-width="2"/><circle cx="60" cy="743.500" r="3" fill="#98909c"/><text x="57" y="713" fill="#1818a0">Z</text><text x="88" y="738" fill="#20d030">Y</text><text x="82" y="758" fill="#c01818">X</text></svg>`);

define('nx-resource-bar',`:host{display:flex;flex:none;width:43px;background:#b0aeb0;border-top:1px solid #888;border-left:10px solid #efebef}
  nav{display:flex;flex-direction:column;gap:2px;padding-top:16px}
  button{width:27px;height:40px;background:#dad8da;border:1px solid #666;border-left-color:#999;border-top-color:#777;display:flex;align-items:center;justify-content:center;box-shadow:inset 0 1px #f4f4f4}
  .gap{margin-top:12px}nx-icon{width:23px;height:23px}`,
  `<nav>${[1,2,3,4,5,6,7,8,9].map(n=>`<button class="${n===3||n===4?'gap':''}" aria-label="资源 ${n}"><nx-icon name="r${n}"></nx-icon></button>`).join('')}</nav>`);

define('nx-assembly-bar',`:host{display:flex;height:66px;background:linear-gradient(#e6e6e6,#cfcfcf);border-top:2px solid #fafafa;border-bottom:1px solid #b0b0b0}
  nx-arrow[more]{width:14px}`,
  `<nx-band wide>${cmd('add','添加组件')}${cmd('parent','新建父对象')}${cmd('mate','配对组件')}${cmd('move','重定位组件')}${cmd('mirror','镜像装配')}${cmd('suppress','编辑抑制状态')}${cmd('arrange','编辑布置')}<nx-sep></nx-sep>${cmd('explode','爆炸图')}${cmd('sequence','装配序列')}<nx-sep></nx-sep>${cmd('work','设为工作部件')}${cmd('display','设为显示部件')}${cmd('link','部件间链接浏览器')}<nx-sep></nx-sep>${cmd('check','检查间隙')}<nx-arrow more></nx-arrow></nx-band>`);

define('nx-taskbar',`:host{display:flex;align-items:center;height:31px;background:#d5d2cc;border-top:1px solid #fff;padding:0 2px;font:16px "Noto Sans","Noto Sans CJK SC",sans-serif}
  button{display:flex;align-items:center;white-space:nowrap}
  .raised{border:1px solid;border-color:#fff #404040 #404040 #fff;box-shadow:inset -1px -1px #888;height:26px}
  .start{width:56px;gap:1px}nx-icon{width:20px;height:20px}.start nx-icon{width:19px}
  .quick{display:flex;gap:6px;margin-left:5px}.more{align-self:flex-start;margin:0 6px 0 10px;line-height:18px}
  .task{width:160px;padding:0 3px;gap:1px;margin-right:3px;overflow:hidden}
  .down{border-color:#404040 #fff #fff #404040;box-shadow:inset 1px 1px #888;background:repeating-conic-gradient(#fff 0 25%,#dedbd5 0 50%) 0 0/2px 2px}
  .kbd{margin-left:auto;margin-right:3px}.kbd nx-icon{width:17px;height:18px}
  .tray{position:relative;width:221px;height:26px;border:1px solid;border-color:#888 #fff #fff #888;display:flex;align-items:center;padding-left:18px}
  .tray nx-icon{width:18px;height:18px;margin-right:2px}
  time{margin-left:auto;padding-right:10px;font-size:15px}
  .mark{position:absolute;left:1px;top:2px;white-space:nowrap;font:bold 15px/22px "DejaVu Sans","Noto Sans CJK SC",sans-serif;color:#fff;-webkit-text-stroke:2px #e84850;paint-order:stroke fill}
  .mark b{font-size:17px;font-weight:500}.quick button{width:20px}`,
  `<button class="raised start"><nx-icon name="win"></nx-icon>开始</button>
   <span class="quick"><button aria-label="桌面"><nx-icon name="ql1"></nx-icon></button><button aria-label="搜索"><nx-icon name="ql2"></nx-icon></button><button aria-label="浏览器"><nx-icon name="e360"></nx-icon></button></span><span class="more">»</span>
   <button class="raised task"><nx-icon name="e360"></nx-icon>NX7.5打孔，有...</button><button class="raised task down"><nx-icon name="nx"></nx-icon>NX 5 - Modeling...</button>
   <button class="kbd" aria-label="输入法"><nx-icon name="kbd"></nx-icon></button>
   <span class="tray">${[1,2,3,4,4,5,6].map(n=>`<nx-icon name="t${n}"></nx-icon>`).join('')}<time>14:23</time><span class="mark"><b>三维网</b>www.3dportal.cn</span></span>`);

define('nx-app',`:host{position:relative;display:flex;flex-direction:column;min-height:100vh;background:#d9d9d9;overflow:hidden}
  main{flex:1;display:flex;min-height:0}`,
  `<nx-titlebar></nx-titlebar><nx-menubar></nx-menubar><nx-standard-bar></nx-standard-bar><nx-feature-bar></nx-feature-bar><nx-selection-bar></nx-selection-bar><nx-status></nx-status>
   <main><nx-viewport></nx-viewport><nx-resource-bar></nx-resource-bar></main>
   <nx-assembly-bar></nx-assembly-bar><nx-taskbar></nx-taskbar><nx-markup></nx-markup><nx-badge></nx-badge>`);
</script>
</body>
</html>
